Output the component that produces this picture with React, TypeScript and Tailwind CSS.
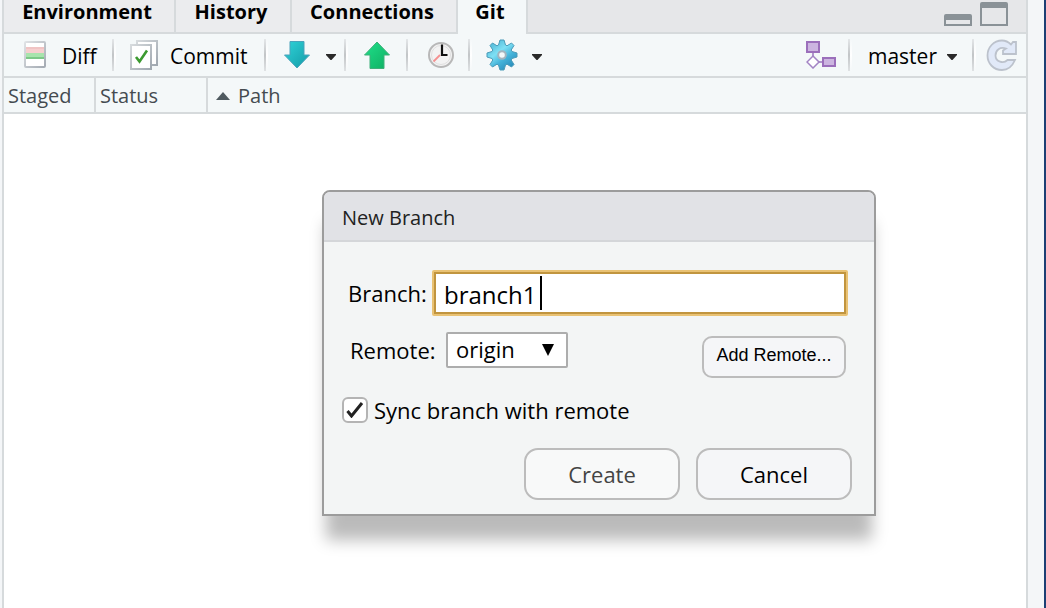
import { useState } from "react";
import type { ReactNode } from "react";

function Separator() {
  return (
    <span aria-hidden="true" className="flex h-8 w-1 shrink-0">
      <span className="w-0.5 bg-linear-to-b from-[#e4e7e9] via-[#c2c5c7] to-[#dfe2e4]" />
      <span className="w-0.5 bg-linear-to-b from-[#f4f8f9] via-white to-[#f4f8f9]" />
    </span>
  );
}

function Caret() {
  return (
    <svg width="10" height="6" viewBox="0 0 10 6" aria-hidden="true" className="mt-1 shrink-0">
      <path d="M0 0h10v1L5.500 6h-1L0 1z" fill="#2a2a2a" />
    </svg>
  );
}

function DiffIcon() {
  return (
    <svg width="24" height="28" viewBox="0 0 24 28" aria-hidden="true" className="shrink-0">
      <defs>
        <linearGradient id="page" x1="0" y1="0" x2="1" y2="1">
          <stop offset="0" stopColor="#dfe2e5" />
          <stop offset="1" stopColor="#a4abb3" />
        </linearGradient>
      </defs>
      <rect x="1" y="1" width="20" height="25" rx="1" fill="#fff" stroke="url(#page)" strokeWidth="2" />
      <path d="M2 6h18v6H2z" fill="#f6cfcf" />
      <path d="M2 6h18v2H2z" fill="#f0c4c4" />
      <path d="M2 12h18v6H2z" fill="#a8e4ad" />
      <path d="M2 16h18v2H2z" fill="#7cc888" />
    </svg>
  );
}

function CommitIcon() {
  return (
    <svg width="28" height="30" viewBox="0 0 28 30" aria-hidden="true" className="shrink-0">
      <defs>
        <linearGradient id="sheet" x1="0" y1="0" x2="1" y2="1">
          <stop offset="0" stopColor="#d6dadd" />
          <stop offset="1" stopColor="#a0a8b0" />
        </linearGradient>
      </defs>
      <rect x="7" y="1" width="20" height="24" fill="#fff" stroke="url(#sheet)" strokeWidth="2" />
      <rect x="1" y="5" width="20" height="24" fill="#fff" stroke="url(#sheet)" strokeWidth="2" />
      <path d="M6 17l3.500 4.500L17 10.500" fill="none" stroke="#3c9a30" strokeWidth="2.600" />
    </svg>
  );
}

function PullIcon() {
  return (
    <svg width="26" height="28" viewBox="0 0 26 28" aria-hidden="true">
      <defs>
        <linearGradient id="pull" x1="0" y1="0" x2="1" y2="1">
          <stop offset="0" stopColor="#2fd3d8" />
          <stop offset="1" stopColor="#139aa6" />
        </linearGradient>
      </defs>
      <path d="M6 .5h14V14h5.500L13 27 .5 14H6z" fill="url(#pull)" stroke="#4aa3bb" strokeWidth="1" />
    </svg>
  );
}

function PushIcon() {
  return (
    <svg width="26" height="28" viewBox="0 0 26 28" aria-hidden="true">
      <defs>
        <linearGradient id="push" x1="0" y1="0" x2="1" y2="1">
          <stop offset="0" stopColor="#1fe08a" />
          <stop offset="1" stopColor="#0fae62" />
        </linearGradient>
      </defs>
      <path d="M6 27.500h14V14h5.500L13 1 .5 14H6z" fill="url(#push)" stroke="#3fb07a" strokeWidth="1" />
    </svg>
  );
}

function ClockIcon() {
  return (
    <svg width="26" height="28" viewBox="0 0 26 28" aria-hidden="true">
      <circle cx="13" cy="14" r="12" fill="#f3f3f3" stroke="#b8b8b8" strokeWidth="2" />
      <circle cx="13" cy="14" r="9.500" fill="none" stroke="#e0e0e0" />
      <path d="M12 14l-6.500 6.500" stroke="#f59090" strokeWidth="1.800" />
      <path d="M14 3.500v10.500h5.500" fill="none" stroke="#111" strokeWidth="2.200" />
    </svg>
  );
}

function GearIcon() {
  return (
    <svg width="32" height="32" viewBox="0 0 32 32" aria-hidden="true">
      <defs>
        <linearGradient id="gear" x1=".2" y1=".1" x2=".8" y2=".9">
          <stop offset="0" stopColor="#55bcda" />
          <stop offset=".35" stopColor="#7fe0f4" />
          <stop offset=".65" stopColor="#45b4da" />
          <stop offset="1" stopColor="#2b8fbd" />
        </linearGradient>
      </defs>
      <path
        d="M14 1h4l1.500 5 1.500.8L25.500 4 28 6.500 25.200 11l.8 1.500 5 1.500v4l-5 1.500-.8 1.500 2.800 4.500-2.500 2.500-4.500-2.800-1.500.8L18 31h-4l-1.500-5-1.500-.8L6.500 28 4 25.500 6.800 21 6 19.500 1 18v-4l5-1.500.8-1.500L4 6.500 6.500 4 11 6.800l1.500-.8z"
        fill="url(#gear)"
        stroke="#4b9bb8"
        strokeWidth="1"
        strokeLinejoin="round"
      />
      <circle cx="16" cy="16" r="3.800" fill="#f4f8f9" stroke="#a3b4be" strokeWidth="2" />
    </svg>
  );
}

function BranchIcon() {
  return (
    <svg width="30" height="28" viewBox="0 0 30 28" aria-hidden="true">
      <path d="M7 12v4M13 21h4" stroke="#9b76bd" strokeWidth="1.500" />
      <rect x="1" y="1" width="12" height="10" fill="#ccb5e0" stroke="#9b6fbb" strokeWidth="2" />
      <rect x="17" y="17" width="12" height="8" fill="#ccb5e0" stroke="#9b6fbb" strokeWidth="2" />
      <path d="M7 15l6 6-6 6-6-6z" fill="#fff" stroke="#a283c4" strokeWidth="1.500" />
    </svg>
  );
}

function RefreshIcon() {
  return (
    <svg width="32" height="32" viewBox="0 0 32 32" aria-hidden="true">
      <path
        d="M25 5.500L27 3h3v12H17v-3.500l3-2C14 7.500 9.500 11 9.500 16.500c0 6.500 8 8.500 12 4.500h7.500C26 28 21.500 31 16 31 7.500 31 1.500 24.500 1.500 16.500S7.500 1.500 16 1.500c3.500 0 6.500 1.500 9 4z"
        fill="#e1e9f8"
        stroke="#bcc2cc"
        strokeWidth="1.800"
      />
    </svg>
  );
}

function ToolButton({ label, className, children }: { label?: string; className: string; children: ReactNode }) {
  return (
    <button type="button" aria-label={label} className={`flex h-10 shrink-0 items-center ${className}`}>
      {children}
    </button>
  );
}

function Tabs() {
  const tab = "h-8 shrink-0 border-r-2 border-[#d6dadc] bg-[#ebecee] pr-1 pb-2 leading-6 text-center";
  return (
    <div className="flex h-[34px] items-start border-b-2 border-[#d6dadc] bg-[#e6e7e9] text-xl font-bold">
      <button type="button" className={`${tab} w-[172px]`}>Environment</button>
      <button type="button" className={`${tab} w-[116px]`}>History</button>
      <button type="button" className={`${tab} w-[166px]`}>Connections</button>
      <button type="button" className="h-[34px] w-[70px] shrink-0 border-r-2 border-[#d6dadc] bg-[#f4f8f9] pr-1 pb-2.5 text-center leading-6">
        Git
      </button>
      <div className="ml-auto flex h-[26px] items-end gap-2 pr-[18px]">
        <button type="button" aria-label="Minimize pane" className="h-3 w-7 rounded-t-xs border-2 border-t-[6px] border-[#8a9297]" />
        <button type="button" aria-label="Maximize pane" className="h-6 w-7 rounded-t-xs border-2 border-t-[6px] border-[#8a9297]" />
      </div>
    </div>
  );
}

function Toolbar() {
  return (
    <div className="flex h-11 items-center border-b-2 border-[#d6dadc] bg-[#f4f8f9] text-[21px]">
      <ToolButton className="ml-5 w-[88px] gap-3.5">
        <DiffIcon />
        <span className="pt-1">Diff</span>
      </ToolButton>
      <Separator />
      <ToolButton className="ml-3.5 w-[134px] gap-3">
        <CommitIcon />
        <span className="pt-1">Commit</span>
      </ToolButton>
      <Separator />
      <ToolButton label="Pull branches" className="ml-4 w-10">
        <PullIcon />
      </ToolButton>
      <ToolButton label="Pull options" className="w-5 pl-0.5">
        <Caret />
      </ToolButton>
      <Separator />
      <ToolButton label="Push branch" className="ml-4 w-[42px]">
        <PushIcon />
      </ToolButton>
      <Separator />
      <ToolButton label="History" className="ml-[18px] w-10">
        <ClockIcon />
      </ToolButton>
      <Separator />
      <ToolButton label="More" className="ml-3.5 gap-3.5">
        <GearIcon />
        <Caret />
      </ToolButton>
      <ToolButton label="New branch" className="ml-auto w-[42px]">
        <BranchIcon />
      </ToolButton>
      <Separator />
      <ToolButton className="ml-4 w-[104px] gap-2.5">
        <span className="pt-1">master</span>
        <Caret />
      </ToolButton>
      <Separator />
      <ToolButton label="Refresh" className="mr-2 ml-2.5">
        <RefreshIcon />
      </ToolButton>
    </div>
  );
}

function FileTable() {
  const cell = "h-9 border-b-2 border-[#d6dadc] p-0 pt-0.5 pl-1 text-left font-normal leading-8";
  return (
    <table className="w-full table-fixed border-separate border-spacing-0 bg-[#f4f8f9] text-xl text-[#444b50]">
      <thead>
        <tr>
          <th className={`${cell} w-[92px] border-r-2`}>Staged</th>
          <th className={`${cell} w-28 border-r-2`}>Status</th>
          <th className={cell} aria-sort="ascending">
            <span className="flex items-center gap-2 pl-1">
              <svg width="14" height="8" viewBox="0 0 14 8" aria-hidden="true">
                <path d="M7 0l7 8H0z" fill="#4f5a60" />
              </svg>
              Path
            </span>
          </th>
        </tr>
      </thead>
    </table>
  );
}

function NewBranchDialog() {
  const [branch, setBranch] = useState("branch1");
  const [sync, setSync] = useState(true);
  return (
    <section
      role="dialog"
      aria-labelledby="dialog-title"
      className="absolute top-[190px] left-[322px] w-[554px] rounded-t-lg border-2 border-[#9c9c9c] bg-[#f3f5f5] text-[22px] shadow-[0_28px_16px_-4px_rgba(0,0,0,0.27)]"
    >
      <h1 id="dialog-title" className="h-[50px] rounded-t-md border-b-2 border-[#d4d6d9] bg-[#e1e2e6] pl-[18px] text-xl leading-[52px] text-[#222]">
        New Branch
      </h1>
      <form className="pt-7 pr-[22px] pb-3.5 pl-[18px]" onSubmit={(e) => e.preventDefault()}>
        <div className="flex items-center pr-1 pl-1.5">
          <label htmlFor="branch" className="w-[84px] shrink-0">Branch:</label>
          <span className="relative flex min-w-0 flex-1 rounded-xs border-2 border-[#e9c274]">
            <input
              id="branch"
              type="text"
              value={branch}
              onChange={(e) => setBranch(e.target.value)}
              className="h-[42px] w-full border-2 border-[#c1953f] bg-white pt-0.5 pl-2 text-2xl outline-none"
            />
            <span aria-hidden="true" className="absolute top-1 left-[106px] h-[34px] w-0.5 bg-black" />
          </span>
        </div>
        <div className="mt-4 flex items-start pr-1.5 pl-2">
          <label htmlFor="remote" className="w-24 shrink-0 leading-9">Remote:</label>
          <span className="relative flex">
            <select
              id="remote"
              className="h-9 w-[122px] appearance-none rounded-xs border-2 border-[#adadad] bg-white pb-0.5 pl-2 text-[22px] leading-7"
            >
              <option>origin</option>
            </select>
            <svg width="12" height="12" viewBox="0 0 12 12" aria-hidden="true" className="pointer-events-none absolute top-3 right-3.5">
              <path d="M0 0h12L6 12z" fill="#000" />
            </svg>
          </span>
          <button
            type="button"
            className="mt-1 ml-auto h-[42px] w-36 rounded-[10px] border-2 border-[#bcbcbc] bg-[#f5f6f8] pb-1 font-['Liberation_Sans',Arial,sans-serif] text-lg"
          >
            Add Remote...
          </button>
        </div>
        <label className="mt-4 flex items-center gap-1.5 leading-8">
          <input
            type="checkbox"
            checked={sync}
            onChange={(e) => setSync(e.target.checked)}
            className="peer size-[26px] shrink-0 appearance-none rounded-md border-2 border-[#b4b4b4] bg-white"
          />
          <svg width="18" height="16" viewBox="0 0 18 16" aria-hidden="true" className="invisible -ml-7 mr-1 shrink-0 peer-checked:visible">
            <path d="M1.500 9l4 5L16 1" fill="none" stroke="#222" strokeWidth="3" />
          </svg>
          Sync branch with remote
        </label>
        <div className="mt-[22px] flex justify-end gap-4">
          <button type="submit" className="h-[52px] w-[156px] rounded-[14px] border-2 border-[#bcbcbc] bg-[#f8f9f9] text-[#444]">
            Create
          </button>
          <button type="button" className="h-[52px] w-[156px] rounded-[14px] border-2 border-[#bcbcbc] bg-[#f5f6f8]">
            Cancel
          </button>
        </div>
      </form>
    </section>
  );
}

export default function App() {
  return (
    <main className="relative flex min-h-screen border-r-2 border-[#1c3f74] bg-[#f4f6f8] pr-4 pl-0.5 font-['Open_Sans','Noto_Sans',sans-serif] text-black">
      <div className="flex min-w-0 flex-1 flex-col border-x-2 border-[#d6dadc] bg-white">
        <Tabs />
        <Toolbar />
        <FileTable />
      </div>
      <NewBranchDialog />
    </main>
  );
}
